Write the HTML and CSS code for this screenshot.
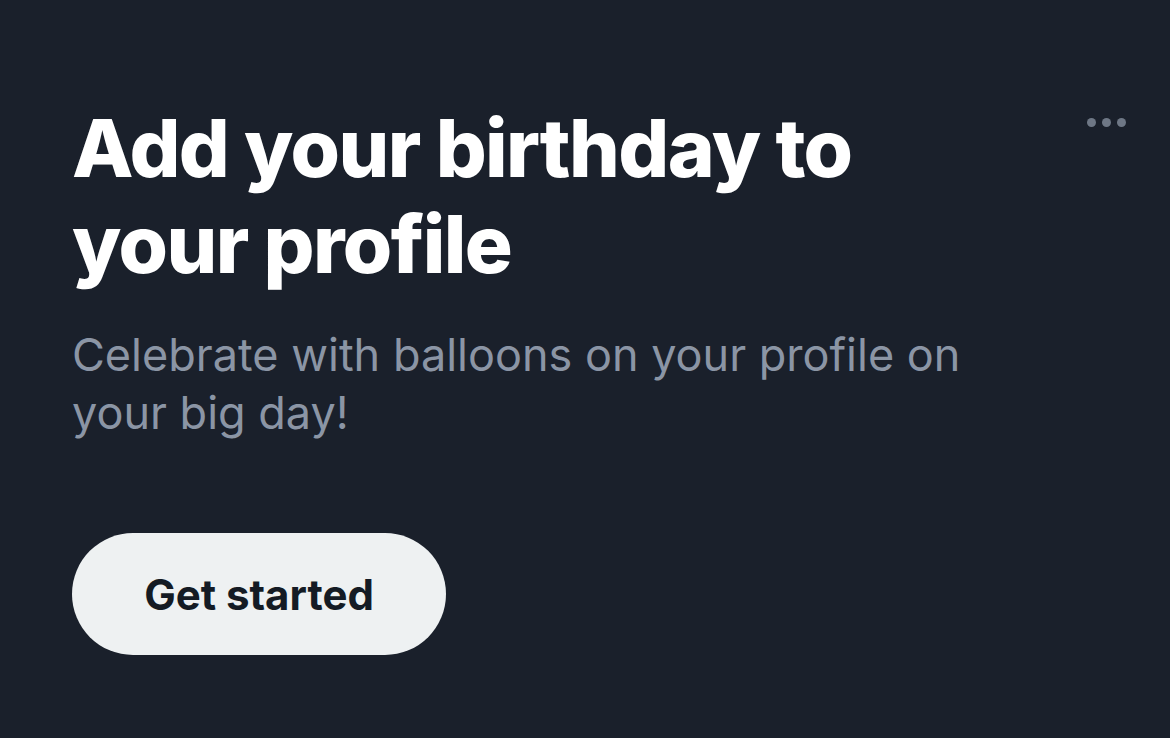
FILE: index.html
```html
<!DOCTYPE html>
<html>
<head>
<meta charset="utf-8">
<link rel="stylesheet" href="styles.css">
</head>
<body>
<div class="card">
  <div class="content">
    <h1 class="title">Add your birthday to your profile</h1>
    <p class="subtitle">Celebrate with balloons on your profile on your big day!</p>
    <button class="cta">Get started</button>
  </div>
  <div class="more" aria-label="More">
    <span class="dot"></span><span class="dot"></span><span class="dot"></span>
  </div>
</div>
</body>
</html>
```
FILE: styles.css
```css
html, body {
  margin: 0;
  padding: 0;
  background: #1a202b;
}
body {
  width: 1170px;
  height: 738px;
  overflow: hidden;
  font-family: Inter, "Noto Sans", sans-serif;
}
.card {
  display: flex;
  justify-content: space-between;
  padding: 100px 0 0 72px;
}
.content {
  width: 920px;
  display: flex;
  flex-direction: column;
  align-items: flex-start;
}
.title {
  margin: 0;
  color: #ffffff;
  font-size: 80px;
  font-weight: 800;
  line-height: 96px;
  letter-spacing: -1.6px;
  width: 850px;
}
.subtitle {
  margin: 34px 0 0 0;
  color: #8b95a5;
  font-size: 45px;
  font-weight: 400;
  line-height: 58px;
  letter-spacing: 0;
  width: 920px;
}
.cta {
  margin-top: 91px;
  width: 374px;
  height: 122px;
  border: none;
  border-radius: 61px;
  background: #eef1f2;
  color: #141b24;
  font-family: Inter, "Noto Sans", sans-serif;
  font-size: 42px;
  font-weight: 700;
  padding: 0;
}
.more {
  display: flex;
  gap: 6px;
  margin: 18px 44px 0 0;
  height: 10px;
}
.dot {
  width: 9px;
  height: 9px;
  border-radius: 50%;
  background: #6e7785;
}
```
